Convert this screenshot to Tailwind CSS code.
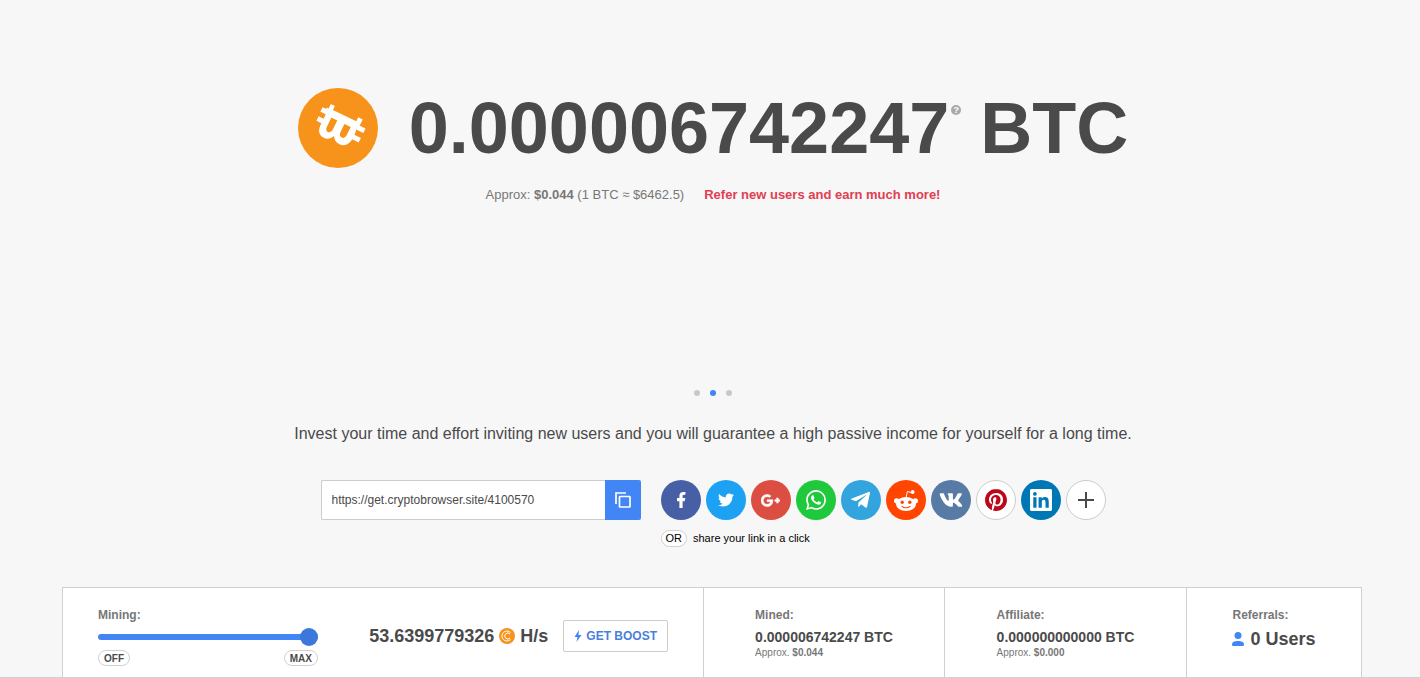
<!DOCTYPE html>
<html lang="en">
<head>
  <meta charset="UTF-8" />
  <meta name="viewport" content="width=device-width, initial-scale=1.0" />
  <title>CryptoBrowser Mining</title>
  <script src="https://cdn.jsdelivr.net/npm/@tailwindcss/browser@4"></script>
</head>
<body class="bg-[#f7f7f7] text-[#4a4a4a] font-['Liberation_Sans',Arial,sans-serif]">

  <main class="pl-1.5 pt-[88px] flex flex-col items-center">
    <!-- Balance -->
    <div class="flex items-center gap-[31px] h-20">
      <svg class="w-20 h-20 shrink-0" viewBox="0 0 80 80">
        <circle cx="40" cy="40" r="40" fill="#f7931a" />
        <g transform="translate(40 40) rotate(26)" fill="#fff">
          <path fill-rule="evenodd" d="M-17-18.500h4.500v4.500H13.500v-4.500H18.500V-7.500H17C18 -2 18 1 17.500 5 16.500 11 13 14 8.500 14 4.500 14 1.500 12 0 9-1.500 12.500-4.500 15-8.500 15-14 15-17 11-17 5V-7h-2v-6.500h2zM-10.500-6.500V3C-10.500 6.500-9.500 8-7.500 8S-4 6-4 3v-9.500zM4-6.500V2C4 5 5 7 7.500 7S11 5 11 2v-8.500z" />
          <path d="M-23-12h6v5h-6zM-22.500-2h6v5h-6zM17-11.500h8v5h-8zM16.500-1h8.500v5h-8.500z" />
        </g>
      </svg>
      <h1 class="flex text-7xl leading-20 font-bold whitespace-nowrap">
        <span>0.000006742247</span>
        <button type="button" aria-label="Help" class="w-[10px] h-[10px] mt-[17px] ml-[2px] mr-[19px] rounded-full bg-[#a9a9a9] text-white text-[9px] leading-[10px] text-center font-bold">?</button>
        <span>BTC</span>
      </h1>
    </div>
    <div class="mt-[17px] flex gap-5 text-[13px] leading-5 text-[#777]">
      <p>Approx: <b>$0.044</b> (1 BTC ≈ $6462.5)</p>
      <a href="#" class="font-bold text-[#e04050]">Refer new users and earn much more!</a>
    </div>

    <!-- Slides -->
    <div class="mt-[185px] flex gap-[10px]">
      <button type="button" aria-label="Slide 1" class="w-1.5 h-1.5 rounded-full bg-[#c8c8c8]"></button>
      <button type="button" aria-label="Slide 2" class="w-1.5 h-1.5 rounded-full bg-[#4285f4]"></button>
      <button type="button" aria-label="Slide 3" class="w-1.5 h-1.5 rounded-full bg-[#c8c8c8]"></button>
    </div>
    <p class="mt-[26px] text-base leading-6 text-center">Invest your time and effort inviting new users and you will guarantee a high passive income for yourself for a long time.</p>

    <!-- Share -->
    <div class="mt-[34px] flex gap-5 items-start">
      <div class="flex w-80 h-10">
        <input type="text" aria-label="Referral link" readonly value="https://get.cryptobrowser.site/4100570" class="grow min-w-0 px-[10px] text-xs bg-white border border-r-0 border-[#ccc] rounded-l-xs outline-none" />
        <button type="button" aria-label="Copy link" class="w-9 bg-[#4285f4] rounded-r-xs flex items-center justify-center">
          <svg class="w-4 h-4" viewBox="0 0 16 16" fill="none" stroke="#fff" stroke-width="1.700"><path d="M1 12V1h10" /><rect x="4.500" y="4.500" width="10.500" height="10.500" rx=".5" /></svg>
        </button>
      </div>
      <div>
        <div class="flex gap-[5px]">
          <a href="#" aria-label="Facebook" class="w-10 h-10 rounded-full bg-[#4760a5] flex items-center justify-center">
            <svg class="w-4 h-4" viewBox="2 2 20 20" fill="#fff"><path d="M14 13.500h2.500l1-4H14v-2c0-1.030 0-2 2-2h1.500V2.140C17.174 2.097 15.943 2 14.643 2 11.928 2 10 3.657 10 6.700v2.800H7v4h3V22h4v-8.500z" /></svg>
          </a>
          <a href="#" aria-label="Twitter" class="w-10 h-10 rounded-full bg-[#1da1f2] flex items-center justify-center">
            <svg class="w-4 h-4" viewBox="0 0 24 24" fill="#fff"><path d="M23.954 4.569c-.885.389-1.830.654-2.825.775 1.014-.611 1.794-1.574 2.163-2.723-.951.555-2.005.959-3.127 1.184-.896-.959-2.173-1.559-3.591-1.559-2.717 0-4.920 2.203-4.920 4.917 0 .39.045.765.127 1.124C7.691 8.094 4.066 6.130 1.640 3.161c-.427.722-.666 1.561-.666 2.475 0 1.710.87 3.213 2.188 4.096-.807-.026-1.566-.248-2.228-.616v.061c0 2.385 1.693 4.374 3.946 4.827-.413.111-.849.171-1.296.171-.314 0-.615-.03-.916-.086.631 1.953 2.445 3.377 4.604 3.417-1.680 1.319-3.809 2.105-6.102 2.105-.39 0-.779-.023-1.170-.067 2.189 1.394 4.768 2.209 7.557 2.209 9.054 0 13.999-7.496 13.999-13.986 0-.209 0-.42-.015-.63.961-.689 1.800-1.560 2.460-2.548z" /></svg>
          </a>
          <a href="#" aria-label="Google Plus" class="w-10 h-10 rounded-full bg-[#dc4e41] flex items-center justify-center">
            <svg class="w-[19px] h-[19px]" viewBox="0 0 24 24" fill="#fff" stroke="#fff" stroke-width=".6"><path d="M7.635 10.909v2.619h4.335c-.173 1.125-1.310 3.295-4.331 3.295-2.604 0-4.731-2.160-4.731-4.823 0-2.662 2.122-4.822 4.728-4.822 1.485 0 2.479.633 3.045 1.178l2.073-1.994c-1.330-1.245-3.056-1.995-5.115-1.995C3.412 4.365 0 7.785 0 12s3.414 7.635 7.635 7.635c4.410 0 7.332-3.098 7.332-7.461 0-.501-.054-.885-.12-1.265H7.635zm16.365 0h-2.183V8.726h-2.183v2.183h-2.182v2.184h2.184v2.189h2.189v-2.189H24z" /></svg>
          </a>
          <a href="#" aria-label="WhatsApp" class="w-10 h-10 rounded-full bg-[#20c83c] flex items-center justify-center">
            <svg class="w-5 h-5" viewBox="0 0 24 24" fill="#fff"><path d="M17.472 14.382c-.297-.149-1.758-.867-2.030-.967-.273-.099-.471-.148-.67.15-.197.297-.767.966-.94 1.164-.173.199-.347.223-.644.075-.297-.15-1.255-.463-2.390-1.475-.883-.788-1.480-1.761-1.653-2.059-.173-.297-.018-.458.13-.606.134-.133.298-.347.446-.52.149-.174.198-.298.298-.497.099-.198.05-.371-.025-.52-.075-.149-.669-1.612-.916-2.207-.242-.579-.487-.5-.669-.51-.173-.008-.371-.01-.57-.01-.198 0-.52.074-.792.372-.272.297-1.040 1.016-1.040 2.479 0 1.462 1.065 2.875 1.213 3.074.149.198 2.096 3.200 5.077 4.487.709.306 1.262.489 1.694.625.712.227 1.360.195 1.871.118.571-.085 1.758-.719 2.006-1.413.248-.694.248-1.289.173-1.413-.074-.124-.272-.198-.57-.347m-5.421 7.403h-.004a9.870 9.870 0 01-5.031-1.378l-.361-.214-3.741.982.998-3.648-.235-.374a9.860 9.860 0 01-1.510-5.260c.001-5.450 4.436-9.884 9.888-9.884 2.640 0 5.122 1.030 6.988 2.898a9.825 9.825 0 012.893 6.994c-.003 5.450-4.437 9.884-9.885 9.884m8.413-18.297A11.815 11.815 0 0012.050 0C5.495 0 .16 5.335.157 11.892c0 2.096.547 4.142 1.588 5.945L.057 24l6.305-1.654a11.882 11.882 0 005.683 1.448h.005c6.554 0 11.890-5.335 11.893-11.893a11.821 11.821 0 00-3.480-8.413z" /></svg>
          </a>
          <a href="#" aria-label="Telegram" class="w-10 h-10 rounded-full bg-[#34a4df] flex items-center justify-center">
            <svg class="w-[19px] h-[22px]" viewBox="0 0 448 512" fill="#fff"><path d="M446.700 98.600l-67.600 318.800c-5.100 22.500-18.400 28.100-37.300 17.500l-103-75.900-49.700 47.800c-5.500 5.500-10.100 10.100-20.700 10.100l7.400-104.900 190.900-172.500c8.300-7.400-1.800-11.500-12.900-4.100L117.800 284 16.200 252.200c-22.100-6.900-22.500-22.100 4.600-32.700L418.200 66.400c18.400-6.900 34.500 4.100 28.500 32.200z" /></svg>
          </a>
          <a href="#" aria-label="Reddit" class="w-10 h-10 rounded-full bg-[#ff4500] flex items-center justify-center">
            <svg class="w-6 h-6" viewBox="0 0 24 24" fill="#fff">
              <circle cx="2.600" cy="12.800" r="2.600" /><circle cx="21.400" cy="12.800" r="2.600" />
              <ellipse cx="12" cy="16" rx="10" ry="6.900" />
              <path d="M12 10l1.300-6.400 5 1.100" fill="none" stroke="#fff" stroke-width="1" />
              <circle cx="18.700" cy="4" r="1.900" />
              <g fill="#ff4500"><circle cx="8.200" cy="14.300" r="1.700" /><circle cx="15.800" cy="14.300" r="1.700" /></g>
              <path d="M8 18.300c2 1.900 6 1.900 8 0" fill="none" stroke="#ff4500" stroke-width="1.100" stroke-linecap="round" />
            </svg>
          </a>
          <a href="#" aria-label="VK" class="w-10 h-10 rounded-full bg-[#587ba5] flex items-center justify-center">
            <svg class="w-6 h-[22px]" viewBox="0 0 576 512" fill="#fff"><path d="M545 117.700c3.700-12.500 0-21.700-17.800-21.700h-58.900c-15 0-21.900 7.900-25.600 16.700 0 0-30 73.100-72.400 120.500-13.700 13.700-20 18.100-27.500 18.100-3.700 0-9.400-4.400-9.400-16.900V117.700c0-15-4.200-21.700-16.600-21.700h-92.600c-9.400 0-15 7-15 13.500 0 14.200 21.200 17.500 23.400 57.500v86.800c0 19-3.400 22.500-10.900 22.500-20 0-68.600-73.400-97.400-157.400-5.800-16.300-11.500-22.900-26.600-22.900H38.800c-16.800 0-20.200 7.900-20.200 16.700 0 15.600 20 93.100 93.100 195.500C160.400 378.100 229 416 291.400 416c37.500 0 42.100-8.400 42.100-22.900 0-66.800-3.400-73.100 15.400-73.100 8.700 0 23.700 4.400 58.700 38.100 40 40 46.600 57.900 69 57.900h58.900c16.800 0 25.300-8.400 20.400-25-11.200-34.900-86.900-106.700-90.300-111.500-8.700-11.200-6.200-16.200 0-26.200.1-.1 72-101.300 79.400-135.600z" /></svg>
          </a>
          <a href="#" aria-label="Pinterest" class="w-10 h-10 rounded-full bg-white border border-[#ccc] flex items-center justify-center">
            <svg class="w-[22px] h-[22px]" viewBox="0 0 24 24" fill="#bd081c"><path d="M12.017 0C5.396 0 .029 5.367.029 11.987c0 5.079 3.158 9.417 7.618 11.162-.105-.949-.199-2.403.041-3.439.219-.937 1.406-5.957 1.406-5.957s-.359-.72-.359-1.781c0-1.663.967-2.911 2.168-2.911 1.024 0 1.518.769 1.518 1.688 0 1.029-.653 2.567-.992 3.992-.285 1.193.6 2.165 1.775 2.165 2.128 0 3.768-2.245 3.768-5.487 0-2.861-2.063-4.869-5.008-4.869-3.410 0-5.409 2.562-5.409 5.199 0 1.033.394 2.143.889 2.741.099.12.112.225.085.345-.09.375-.293 1.199-.334 1.363-.053.225-.172.271-.401.165-1.495-.69-2.433-2.878-2.433-4.646 0-3.776 2.748-7.252 7.920-7.252 4.158 0 7.392 2.967 7.392 6.923 0 4.135-2.607 7.462-6.233 7.462-1.214 0-2.354-.629-2.758-1.379l-.749 2.848c-.269 1.045-1.004 2.352-1.498 3.146 1.123.345 2.306.535 3.550.535 6.607 0 11.985-5.365 11.985-11.987C23.970 5.390 18.592.026 11.985.026z" /></svg>
          </a>
          <a href="#" aria-label="LinkedIn" class="w-10 h-10 rounded-full bg-[#0077b5] flex items-center justify-center">
            <svg class="w-[22px] h-[22px]" viewBox="0 0 24 24" fill="#fff"><path d="M20.447 20.452h-3.554v-5.569c0-1.328-.027-3.037-1.852-3.037-1.853 0-2.136 1.445-2.136 2.939v5.667H9.351V9h3.414v1.561h.046c.477-.9 1.637-1.850 3.370-1.850 3.601 0 4.267 2.370 4.267 5.455v6.286zM5.337 7.433a2.062 2.062 0 01-2.063-2.065 2.064 2.064 0 112.063 2.065zm1.782 13.019H3.555V9h3.564v11.452zM22.225 0H1.771C.792 0 0 .774 0 1.729v20.542C0 23.227.792 24 1.771 24h20.451C23.200 24 24 23.227 24 22.271V1.729C24 .774 23.200 0 22.222 0z" /></svg>
          </a>
          <button type="button" aria-label="More" class="w-10 h-10 rounded-full bg-white border border-[#ccc] flex items-center justify-center">
            <svg class="w-4 h-4" viewBox="0 0 16 16" fill="none" stroke="#4a4a4a" stroke-width="2"><path d="M8 0v16M0 8h16" /></svg>
          </button>
        </div>
        <div class="mt-[10px] flex items-center gap-[6px] text-[11px] leading-[15px] text-black">
          <span class="px-1 bg-white border border-[#d0d0d0] rounded-full">OR</span>
          <span>share your link in a click</span>
        </div>
      </div>
    </div>
  </main>

  <!-- Stats bar -->
  <footer class="mt-10 pl-1 border-b border-[#d0d0d0]">
    <div class="mx-auto max-w-[1300px] grid grid-cols-[641fr_241fr_242fr_174fr] bg-white border border-b-0 border-[#d0d0d0] divide-x divide-[#d0d0d0]">
      <div class="px-[35px] pt-5 pb-[11px] flex justify-between">
        <div class="w-[220px]">
          <label for="mining" class="block text-xs leading-[14px] font-bold text-[#777]">Mining:</label>
          <input type="range" id="mining" min="0" max="100" value="100" class="block w-full h-[18px] mt-1.5 appearance-none bg-transparent [&::-webkit-slider-runnable-track]:h-1.5 [&::-webkit-slider-runnable-track]:rounded-full [&::-webkit-slider-runnable-track]:bg-[#4285f4] [&::-webkit-slider-thumb]:appearance-none [&::-webkit-slider-thumb]:w-[18px] [&::-webkit-slider-thumb]:h-[18px] [&::-webkit-slider-thumb]:-mt-1.5 [&::-webkit-slider-thumb]:rounded-full [&::-webkit-slider-thumb]:bg-[#3c78dc]" />
          <div class="mt-1 flex justify-between text-[10px] leading-[13px] font-bold">
            <button type="button" class="px-[5px] pt-px border border-[#d0d0d0] rounded-full">OFF</button>
            <button type="button" class="px-[5px] pt-px border border-[#d0d0d0] rounded-full">MAX</button>
          </div>
        </div>
        <div class="flex items-center gap-[15px] h-14">
          <p class="flex items-center gap-[5px] text-lg font-bold">
            53.6399779326
            <svg class="w-4 h-4" viewBox="0 0 16 16" fill="none">
              <circle cx="8" cy="8" r="8" fill="#f7931a" />
              <path d="M11.500 4.500A5 5 0 1 0 11.500 11.500M11 6A3 3 0 1 0 11 10" stroke="#fff" stroke-width="1" />
            </svg>
            H/s
          </p>
          <button type="button" class="h-8 px-[10px] flex items-center gap-1 text-xs font-bold text-[#4a7fdc] border border-[#ccc] rounded-xs">
            <svg class="w-2 h-3" viewBox="0 0 8 12" fill="#4285f4"><path d="M5 0L.5 7H3.500L2.500 12 7.500 5H4.500z" /></svg>
            GET BOOST
          </button>
        </div>
      </div>
      <div class="pt-5 flex justify-center">
        <div>
          <h2 class="text-xs leading-[14px] font-bold text-[#777]">Mined:</h2>
          <p class="mt-1.5 text-sm leading-[18px] font-bold">0.000006742247 BTC</p>
          <p class="text-[10px] leading-[14px] text-[#777]">Approx. <b>$0.044</b></p>
        </div>
      </div>
      <div class="pt-5 flex justify-center">
        <div>
          <h2 class="text-xs leading-[14px] font-bold text-[#777]">Affiliate:</h2>
          <p class="mt-1.5 text-sm leading-[18px] font-bold">0.000000000000 BTC</p>
          <p class="text-[10px] leading-[14px] text-[#777]">Approx. <b>$0.000</b></p>
        </div>
      </div>
      <div class="pt-5 flex justify-center">
        <div>
          <h2 class="text-xs leading-[14px] font-bold text-[#777]">Referrals:</h2>
          <p class="mt-1.5 flex items-center gap-1.5 text-lg leading-[22px] font-bold">
            <svg class="w-3 h-[14px]" viewBox="0 0 12 14" fill="#4285f4"><circle cx="6" cy="3.500" r="3.500" /><path d="M0 12.500C0 10 2.500 9 6 9s6 1 6 3.500c0 1-.5 1.500-1.500 1.500h-9C.5 14 0 13.500 0 12.500z" /></svg>
            0 Users
          </p>
        </div>
      </div>
    </div>
  </footer>
</body>
</html>
